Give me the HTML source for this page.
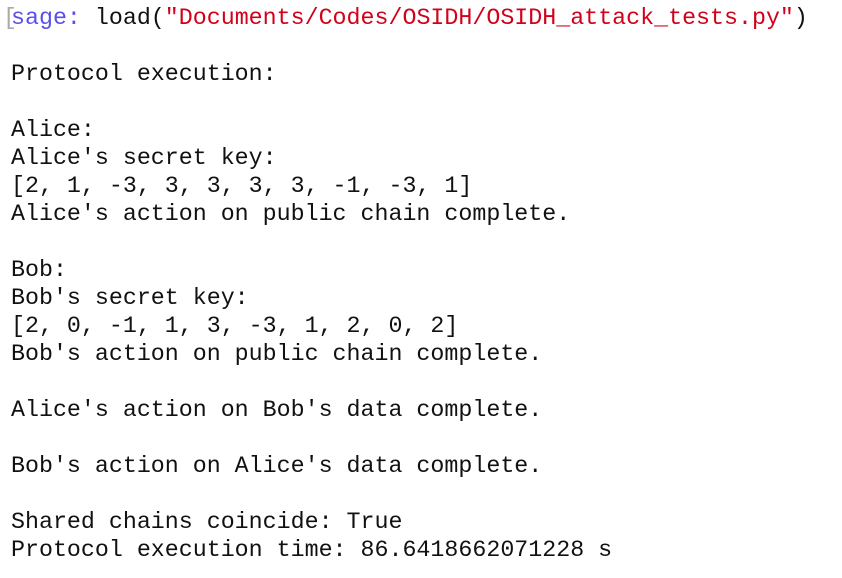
<!DOCTYPE html>
<html><head><style>
html,body{margin:0;padding:0;background:#fff;width:842px;height:578px;overflow:hidden}
pre{margin:0;position:absolute;left:11px;top:4px;font-family:"Liberation Mono",monospace;font-size:23.3px;line-height:28px;color:#111}
.b{position:absolute;left:3px;top:4px;font-family:"Liberation Mono",monospace;font-size:23.3px;line-height:28px;color:#aaa}
.s{color:#5b4fe8}.r{color:#d0021b}
</style></head><body>
<div class="b">[</div>
<pre><span class="s">sage:</span> load(<span class="r">"Documents/Codes/OSIDH/OSIDH_attack_tests.py"</span>)

Protocol execution:

Alice:
Alice's secret key:
[2, 1, -3, 3, 3, 3, 3, -1, -3, 1]
Alice's action on public chain complete.

Bob:
Bob's secret key:
[2, 0, -1, 1, 3, -3, 1, 2, 0, 2]
Bob's action on public chain complete.

Alice's action on Bob's data complete.

Bob's action on Alice's data complete.

Shared chains coincide: True
Protocol execution time: 86.6418662071228 s</pre>
</body></html>
